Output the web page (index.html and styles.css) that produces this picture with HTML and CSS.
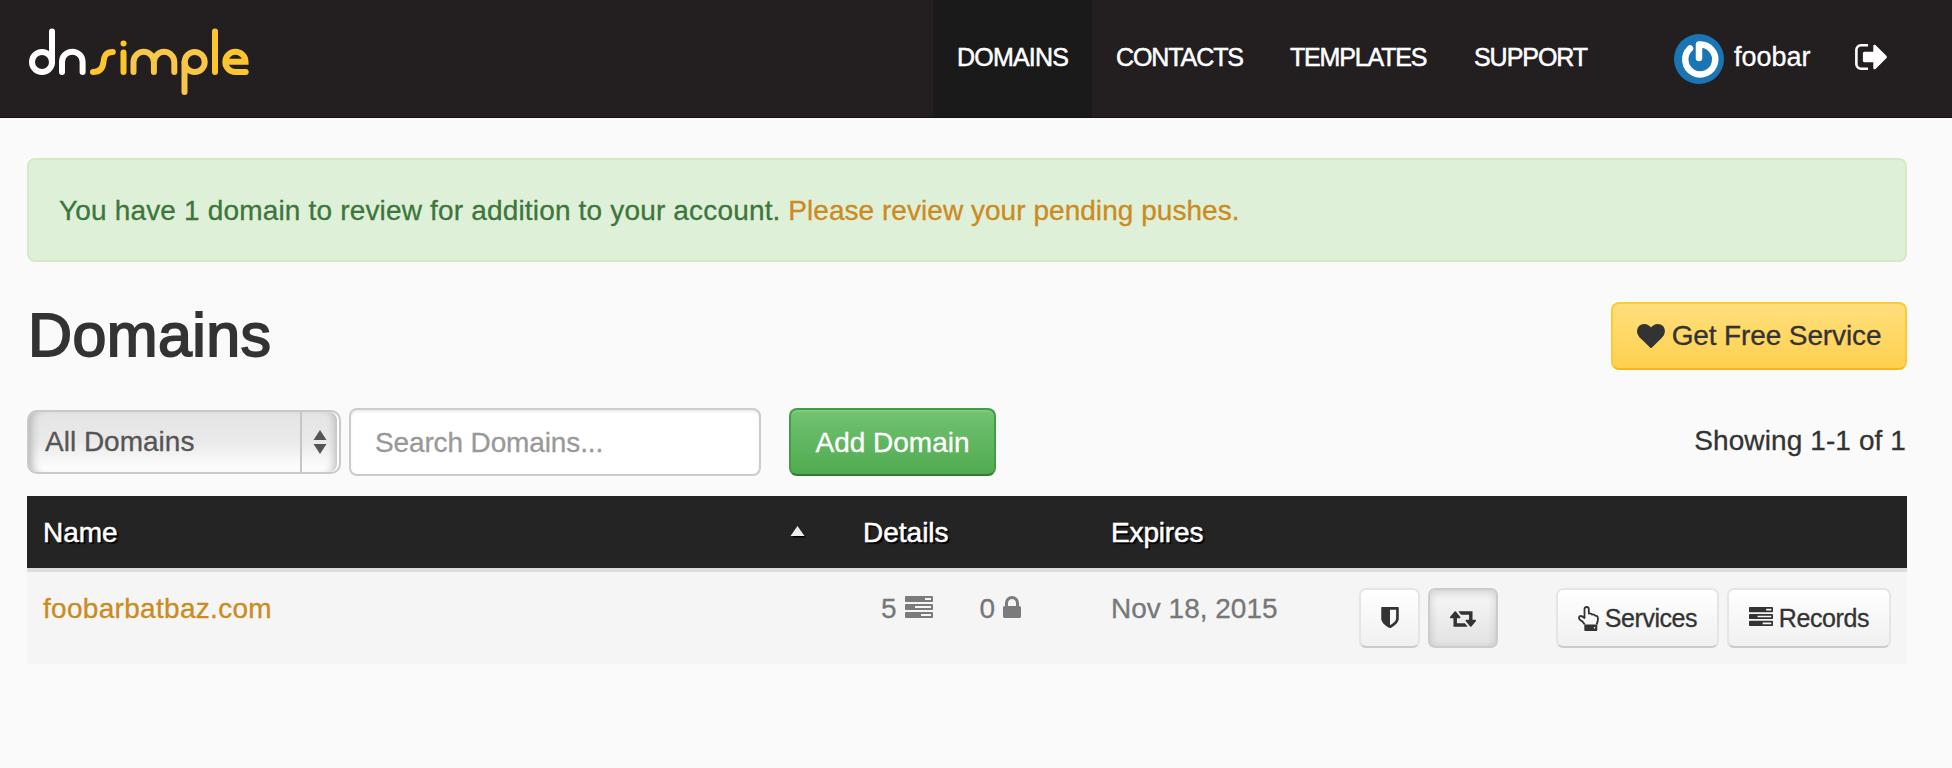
FILE: index.html
```html
<!DOCTYPE html>
<html lang="en">
<head>
<meta charset="utf-8">
<title>Domains - DNSimple</title>
<link rel="stylesheet" href="styles.css">
</head>
<body>
<svg class="sprite" aria-hidden="true">
  <symbol id="tasks" viewBox="0 128 1792 1408"><path d="M1024 1408h640v-128h-640v128zm-384-512h1024v-128h-1024v128zm640-512h384v-128h-384v128zm512 832v256q0 26-19 45t-45 19h-1664q-26 0-45-19t-19-45v-256q0-26 19-45t45-19h1664q26 0 45 19t19 45zm0-512v256q0 26-19 45t-45 19h-1664q-26 0-45-19t-19-45v-256q0-26 19-45t45-19h1664q26 0 45 19t19 45zm0-512v256q0 26-19 45t-45 19h-1664q-26 0-45-19t-19-45v-256q0-26 19-45t45-19h1664q26 0 45 19t19 45z"/></symbol>
</svg>
<header class="topbar">
  <a class="logo" aria-label="dnsimple">
    <svg width="222" height="70" viewBox="28 27 222 70" fill="none" stroke-width="6" stroke-linecap="round">
      <g stroke="#fff"><circle cx="42" cy="62" r="10"/><path d="M52 31.500V62M62 72V62a10.300 10.300 0 0 1 20.600 0v10"/></g>
      <g stroke="#ffc52c"><path d="M93 72C101 72 103 67 103.500 62S105 52 112.800 52M123.500 52.500V72M215 31.500V72"/><path d="M227 61.800h18.500A10.100 10.100 0 1 0 235.500 72h10.200"/></g>
      <g stroke="#f8c648"><path d="M133.500 72V62a10.200 10.200 0 0 1 20.400 0v10M153.900 62a10.200 10.200 0 0 1 20.400 0v10M184.500 92V62"/><circle cx="194.700" cy="62" r="10"/></g>
      <circle cx="123.500" cy="43.500" r="3" fill="#ffc52c" stroke="none"/>
    </svg>
  </a>
  <nav class="nav">
    <a class="nav-item active"><span class="t-dom">DOMAINS</span></a>
    <a class="nav-item"><span class="t-con">CONTACTS</span></a>
    <a class="nav-item"><span class="t-tem">TEMPLATES</span></a>
    <a class="nav-item"><span class="t-sup">SUPPORT</span></a>
  </nav>
  <a class="user">
    <svg width="50" height="50" viewBox="0 0 50 50" fill="none"><circle cx="25" cy="25" r="25" fill="#1b75b5"/><path d="M16 14.500A15 15 0 1 0 25 10.500V24" stroke="#fff" stroke-width="6.500" stroke-linecap="round" stroke-linejoin="round"/></svg>
    <span class="t-user">foobar</span>
  </a>
  <a class="signout" aria-label="Sign out">
    <svg width="32" height="26" viewBox="64 256 1568 1280" fill="#fff"><path d="M704 1440q0 4 1 20t.5 26.500-3 23.500-10 19.500-20.500 6.500h-320q-119 0-203.500-84.500t-84.500-203.500v-704q0-119 84.500-203.500t203.500-84.500h320q13 0 22.500 9.500t9.500 22.500q0 4 1 20t.5 26.500-3 23.500-10 19.500-20.500 6.500h-320q-66 0-113 47t-47 113v704q0 66 47 113t113 47h312l11.500 1 11.500 3 8 5.500 7 9 2 13.500zm928-544q0 26-19 45l-544 544q-19 19-45 19t-45-19-19-45v-288h-448q-26 0-45-19t-19-45v-384q0-26 19-45t45-19h448v-288q0-26 19-45t45-19 45 19l544 544q19 19 19 45z"/></svg>
  </a>
</header>
<main class="content">
  <div class="alert"><span class="t-alert">You have 1 domain to review for addition to your account.</span> <a class="link t-push">Please review your pending pushes.</a></div>
  <div class="title-row">
    <h1>Domains</h1>
    <button class="btn btn-yellow">
      <svg width="28" height="24" viewBox="0 128 1792 1536" fill="#333"><path d="M896 1664q-26 0-44-18l-624-602q-10-8-27.500-26t-55.500-65.500-68-97.500-53.500-121-23.500-138q0-220 127-344t351-124q62 0 126.500 21.500t120 58 95.500 68.500 76 68q36-36 76-68t95.500-68.500 120-58 126.500-21.500q224 0 351 124t127 344q0 221-229 450l-623 600q-18 18-44 18z"/></svg>
      <span class="t-free">Get Free Service</span>
    </button>
  </div>
  <div class="tools">
    <div class="select"><span class="select-label t-all">All Domains</span><span class="select-arrows"><svg width="14" height="24" viewBox="0 0 14 24" fill="#555"><path d="M7 0l6.500 10H.5zM7 24l6.500-10H.5z"/></svg></span></div>
    <div class="search"><span class="t-search">Search Domains...</span></div>
    <button class="btn btn-green"><span class="t-add">Add Domain</span></button>
    <span class="count t-count">Showing 1-1 of 1</span>
  </div>
  <div class="table">
    <div class="thead">
      <div class="th th-name"><span class="t-name">Name</span><svg width="16" height="12" viewBox="0 0 16 12"><path d="M8.500 2l7 9.500h-13z" fill="#000"/><path d="M7.500 0l7 10H0.500z" fill="#eee"/></svg></div>
      <div class="th"><span class="t-det">Details</span></div>
      <div class="th"><span class="t-exp">Expires</span></div>
    </div>
    <div class="row">
      <div class="cell cell-name"><a class="link t-host">foobarbatbaz.com</a></div>
      <div class="cell cell-details">
        <span class="stat"><span>5</span><svg width="28" height="22" fill="#7b7b7b"><use href="#tasks"/></svg></span>
        <span class="stat"><span>0</span><svg width="18" height="22" viewBox="320 128 1152 1408" fill="#7b7b7b"><path d="M640 768h512v-192q0-106-75-181t-181-75-181 75-75 181v192zm832 96v576q0 40-28 68t-68 28h-960q-40 0-68-28t-28-68v-576q0-40 28-68t68-28h32v-192q0-184 132-316t316-132 316 132 132 316v192h32q40 0 68 28t28 68z"/></svg></span>
      </div>
      <div class="cell"><span class="t-date">Nov 18, 2015</span></div>
      <div class="actions">
        <button class="sbtn b-shield"><svg width="18" height="21" viewBox="256 128 1280 1536" fill="#333"><path d="M1344 960v-640h-448v1137q119-63 213-137 235-184 235-360zm192-768v768q0 86-33.500 170.500t-83 150-118 127.500-126.500 103-121 77.500-89.500 49.500-42.500 20q-12 6-26 6t-26-6q-16-7-42.500-20t-89.500-49.500-121-77.500-126.500-103-118-127.500-83-150-33.500-170.500v-768q0-26 19-45t45-19h1152q26 0 45 19t19 45z"/></svg></button>
        <button class="sbtn b-renew pressed"><svg width="26" height="16" viewBox="0 384 1920 1152" fill="#333"><path d="M1280 1504q0 13-9.500 22.500t-22.500 9.500h-960q-8 0-13.500-2t-9-7-5.500-8-3-11.500-1-11.500v-600h-192q-26 0-45-19t-19-45q0-24 15-41l320-384q19-22 49-22t49 22l320 384q15 17 15 41 0 26-19 45t-45 19h-192v384h576q16 0 25 11l160 192q7 10 7 21zm640-416q0 24-15 41l-320 384q-20 23-49 23t-49-23l-320-384q-15-17-15-41 0-26 19-45t45-19h192v-384h-576q-16 0-25-12l-160-192q-7-9-7-20 0-13 9.500-22.500t22.500-9.500h960q8 0 13.500 2t9 7 5.500 8 3 11.500 1 11.500v600h192q26 0 45 19t19 45z"/></svg></button>
        <button class="sbtn b-services"><svg width="21" height="25" viewBox="0 0 21 25" fill="none" stroke="#333" stroke-width="1.800" stroke-linejoin="round"><path d="M6.800 18.500Q4.500 14.800 2 13.800Q.2 12 1.500 10.500Q3 9 6.500 12V3Q6.700 1 8.700 1T10.800 3V7.500Q13 7 14.200 8.600Q16 8 17.200 9.600Q20 9.500 20 12.500Q20 15.500 18.600 18.500"/><path d="M7.200 19.300h11.200v4.700H7.200z" fill="#333"/><circle cx="16.500" cy="21.800" r=".8" fill="#fff" stroke="none"/></svg><span class="t-serv">Services</span></button>
        <button class="sbtn b-records"><svg width="24" height="19" fill="#333"><use href="#tasks"/></svg><span class="t-rec">Records</span></button>
      </div>
    </div>
  </div>
</main>
</body>
</html>
```
FILE: styles.css
```css
* { box-sizing: border-box; }
body { margin: 0; background: #fafafa; color: #333; font: 28px/40px "Liberation Sans", Arial, sans-serif; -webkit-text-stroke: .3px; }
svg { display: block; flex: none; }
.sprite { display: none; }
a { text-decoration: none; }
button { font: inherit; color: inherit; padding: 0; margin: 0; }
span { white-space: nowrap; }

.topbar { display: flex; height: 118px; background: #231f20; border-bottom: 1px solid #130f14; color: #fff; padding-left: 28px; }
.logo { padding-top: 27px; width: 905px; flex: none; }
.nav { display: grid; grid-template-columns: 159px 174px 184px 160px; font-size: 25px; -webkit-text-stroke: .5px; }
.nav-item { padding: 37px 0 0 24px; height: 117px; }
.nav-item.active { background: #1a1a1a; }
.t-dom { letter-spacing: -.8px; }
.t-con { letter-spacing: -1.090px; }
.t-tem { letter-spacing: -1.170px; }
.t-sup { letter-spacing: -1.050px; }
.user { display: flex; gap: 10px; padding-top: 34px; margin-left: 64px; font-size: 27px; }
.user .t-user { padding-top: 3px; }
.signout { padding-top: 44px; margin-left: 44px; }

.content { padding: 40px 45px 0 27px; }
.alert { height: 104px; border: 2px solid #d6e9c6; border-radius: 8px; background: #dff0d8; color: #3c763d; padding: 31px 30px; white-space: nowrap; }
.t-alert { letter-spacing: .17px; }
.t-push { letter-spacing: .04px; }
.link { color: #cb8b20; }
.title-row { display: flex; justify-content: space-between; margin-top: 40px; height: 68px; }
h1 { margin: 0; font-size: 61px; line-height: 66px; font-weight: 400; padding-left: 1px; letter-spacing: .4px; -webkit-text-stroke: 1.800px; }
.btn { display: flex; align-items: center; justify-content: center; height: 68px; border-radius: 8px; border: 2px solid; }
.btn-yellow { width: 296px; gap: 7px; border-color: #ffc936 #ffc936 #f5b822; background: linear-gradient(#ffdf7d, #ffd04e); }
.btn-yellow svg { margin-top: 0; }
.t-free { letter-spacing: -.12px; }
.btn-green { width: 207px; margin-left: 28px; color: #fff; border-color: #459c45 #459c45 #357935; background: linear-gradient(#72c272, #4fab4f); box-shadow: inset 0 2px 0 rgba(255,255,255,.12); }

.tools { display: flex; align-items: center; margin-top: 38px; height: 68px; }
.select { display: flex; width: 314px; height: 64px; border: 2px solid #c9c9c9; border-radius: 10px; color: #555; background: linear-gradient(#e4e4e4, #eaeaea 50%, #fff); box-shadow: inset 10px 0 10px -8px #aaa, inset -2px 0 0 #fff, inset -10px 0 8px -6px #b5b5b5; }
.select-label { width: 273px; padding: 10px 0 0 16px; border-right: 2px solid #c6c6c6; }
.select-arrows { padding: 18px 0 0 11px; }
.search { width: 412px; height: 68px; margin-left: 8px; border: 2px solid #ccc; border-radius: 8px; background: #fff; color: #999; padding: 13px 24px; box-shadow: inset 0 2px 3px rgba(0,0,0,.075); }
.t-search { letter-spacing: -.13px; }
.btn-green .t-add { padding-top: 1px; }
.count { margin-left: auto; padding-right: 1px; margin-top: -3px; letter-spacing: .1px; }

.table { margin-top: 20px; }
.thead, .row { display: grid; grid-template-columns: 836px 248px 248px 1fr; }
.thead { height: 72px; background: #242424; color: #fff; text-shadow: 2px 2px 1px #000; padding-top: 17px; -webkit-text-stroke: .5px; }
.th-name { display: flex; justify-content: space-between; align-items: center; padding: 0 57px 0 16px; height: 40px; }
.th-name svg { margin-top: -2px; }
.t-exp { letter-spacing: -.15px; }
.row { height: 96px; background: #f5f5f5; border-top: 4px solid #ddd; color: #777; }
.cell { padding-top: 17px; }
.cell-name { padding-left: 16px; }
.t-host { letter-spacing: .3px; }
.cell-details { display: flex; gap: 47px; padding-left: 18px; }
.stat { display: flex; gap: 8px; height: 40px; }
.stat svg { margin-top: 7px; }
.actions { display: flex; gap: 8px; padding-top: 16px; color: #333; font-size: 25px; }
.sbtn { display: flex; align-items: center; justify-content: center; height: 60px; border: 2px solid #e5e5e5; border-bottom-color: #ccc; border-radius: 7px; background: linear-gradient(#fff, #f0f0f0); }
.b-shield { width: 61px; }
.b-shield svg { margin-top: -1px; }
.b-renew { width: 70px; }
.b-renew svg { margin-top: 1px; }
.pressed { border-color: #ccc; background: linear-gradient(#f8f8f8, #e2e2e2); box-shadow: inset 0 3px 9px rgba(0,0,0,.16); }
.b-services { width: 163px; margin-left: 50px; gap: 6px; letter-spacing: -.45px; }
.b-records { width: 164px; gap: 6px; letter-spacing: -.4px; }
.b-records svg { margin-top: -3px; }
```
